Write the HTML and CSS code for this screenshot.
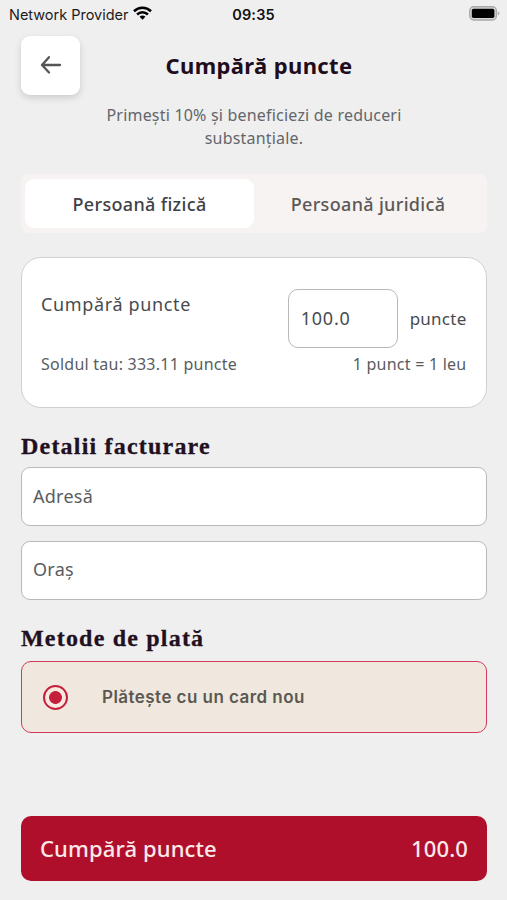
FILE: index.html
```html
<!DOCTYPE html>
<html lang="ro">
<head>
<meta charset="utf-8">
<meta name="viewport" content="width=device-width, initial-scale=1">
<title>Cumpără puncte</title>
<link rel="stylesheet" href="styles.css">
</head>
<body>
<div class="status">
  <div class="carrier"><span>Network Provider</span>
    <svg class="wifi" width="19" height="14" viewBox="0 0 19 14" fill="none" stroke="#000" stroke-width="2.6"><path d="M1 5.2C5.8.5 13.2.5 18 5.2"/><path d="M4.1 8.5c3.1-3 7.7-3 10.8 0"/><path d="M6.6 10.7c1.7-1.5 4.1-1.5 5.8 0L9.5 13.7z" fill="#000" stroke="none"/></svg>
  </div>
  <time class="clock">09:35</time>
  <svg class="battery" width="31" height="15" viewBox="0 0 31 15"><rect x=".8" y=".8" width="26.6" height="13.2" rx="4" fill="#d6d6d6" stroke="#a9a9a9" stroke-width="1.4"/><rect x="2.8" y="2.8" width="22.6" height="9.2" rx="1.8"/><path d="M28.9 5.2c2 .8 2 3.6 0 4.4z" fill="#a9a9a9"/></svg>
</div>
<header class="top">
  <button class="back" aria-label="Înapoi"><svg width="22" height="20" viewBox="0 0 22 20" fill="none" stroke="#555" stroke-width="2.3" stroke-linecap="round" stroke-linejoin="round"><path d="M20 10H2M9 2.2 2 10l7 7.5"/></svg></button>
  <h1 class="title">Cumpără puncte</h1>
</header>
<p class="intro">Primești 10% și beneficiezi de reduceri<br>substanțiale.</p>
<div class="tabs">
  <div class="tab active"><span>Persoană fizică</span></div>
  <div class="tab"><span>Persoană juridică</span></div>
</div>
<section class="card">
  <div class="row">
    <span class="label">Cumpără puncte</span>
    <div class="amount"><div class="amount-box">100.0</div><span class="unit">puncte</span></div>
  </div>
  <div class="row notes"><span class="balance">Soldul tau: 333.11 puncte</span><span class="rate">1 punct = 1 leu</span></div>
</section>
<h2 class="heading billing">Detalii facturare</h2>
<div class="fields">
  <div class="field">Adresă</div>
  <div class="field city">Oraș</div>
</div>
<h2 class="heading payment">Metode de plată</h2>
<div class="method"><span class="radio"></span><span class="method-name">Plătește cu un card nou</span></div>
<button class="buy"><span class="buy-label">Cumpără puncte</span><span class="buy-total">100.0</span></button>
</body>
</html>
```
FILE: styles.css
```css
* { box-sizing: border-box; }
body {
  margin: 0;
  padding: 0 20px 0 21px;
  height: 900px;
  overflow: hidden;
  display: flex;
  flex-direction: column;
  background: #efefef;
  color: #484b4f;
  font-family: "Noto Sans", sans-serif;
}
button { border: 0; padding: 0; font: inherit; }
.status {
  display: grid;
  grid-template-columns: 1fr auto 1fr;
  align-items: center;
  height: 28px;
  margin: 0 -13px 0 -12px;
  font-family: Inter, sans-serif;
  font-size: 14.5px;
  color: #1c1c1c;
}
.carrier { display: flex; align-items: center; gap: 5px; white-space: nowrap; }
.carrier span { letter-spacing: -0.02px; }
.wifi { margin-top: -3px; }
.clock { margin-left: -2px; font-weight: 600; font-size: 14.5px; letter-spacing: 0.15px; color: #111; }
.battery { justify-self: end; margin-top: -2px; }
.top {
  display: grid;
  grid-template-columns: 60px 1fr 60px;
  align-items: center;
  height: 60px;
  margin-top: 7px;
}
.back {
  width: 59px;
  height: 59px;
  display: grid;
  place-items: center;
  background: #fff;
  border-radius: 9px;
  box-shadow: 0 3px 7px rgba(0, 0, 0, 0.14);
}
.title {
  margin: 0 0 0 10px;
  text-align: center;
  font-size: 22px;
  font-weight: 700;
  line-height: 30px;
  letter-spacing: 0.37px;
  color: #1f0d1d;
}
.intro {
  margin: 9px 0 0;
  text-align: center;
  font-size: 16px;
  line-height: 23px;
  letter-spacing: 0.2px;
  color: #63666a;
}
.tabs {
  display: grid;
  grid-template-columns: 229px 1fr;
  height: 59px;
  margin-top: 24px;
  padding: 5px 5px 5px 4px;
  background: #f7f3f2;
  border-radius: 8px;
}
.tab {
  display: grid;
  place-items: center;
  border-radius: 9px;
  font-size: 18px;
  font-weight: 500;
  letter-spacing: 0.33px;
  color: #5c5856;
}
.active { background: #fff; color: #3e4147; }
.card {
  height: 151px;
  margin-top: 24px;
  padding: 31px 19.5px 0 19px;
  background: #fff;
  border: 1px solid #d0d0d0;
  border-radius: 20px;
}
.row { display: flex; justify-content: space-between; }
.label { margin-top: 1px; font-size: 18px; line-height: 28px; letter-spacing: 0.65px; }
.amount { display: flex; align-items: center; gap: 12px; }
.amount-box {
  width: 110px;
  height: 59px;
  padding-left: 12px;
  border: 1px solid #b9b9b9;
  border-radius: 10px;
  font-size: 18px;
  line-height: 57px;
  letter-spacing: 0.8px;
}
.unit { font-size: 17px; letter-spacing: 0.25px; }
.notes { margin-top: 4px; font-size: 16px; line-height: 24px; letter-spacing: 0.24px; color: #595c60; }
.heading {
  margin: 0;
  font-family: "Liberation Serif", serif;
  font-weight: 700;
  font-size: 24px;
  line-height: 30px;
  letter-spacing: 1.2px;
  color: #22101f;
  -webkit-text-stroke: 0.3px #22101f;
}
.billing { margin-top: 23px; }
.fields { display: grid; gap: 15px; margin-top: 6px; }
.field {
  height: 59px;
  padding-left: 11px;
  background: #fff;
  border: 1px solid #b9b9b9;
  border-radius: 9px;
  font-size: 18px;
  line-height: 57px;
  letter-spacing: 0.25px;
  color: #595c60;
}
.city { line-height: 55px; }
.payment { margin-top: 23px; }
.method {
  display: flex;
  align-items: center;
  gap: 34px;
  height: 72px;
  margin-top: 8px;
  padding-left: 21px;
  background: #f0e8de;
  border: 1.5px solid #d23a5c;
  border-radius: 10px;
}
.radio {
  width: 25px;
  height: 25px;
  border: 2.5px solid #c41f3b;
  border-radius: 50%;
  background: radial-gradient(circle, #c41f3b 6px, #f7e8e0 6.8px);
}
.method-name { font-family: Inter, sans-serif; font-weight: 600; font-size: 17px; letter-spacing: 0.45px; color: #5b5852; }
.buy {
  display: flex;
  align-items: center;
  justify-content: space-between;
  height: 65px;
  margin-top: 83px;
  padding: 0 19px 2px 19px;
  background: #b00f2b;
  border-radius: 10px;
  color: #fbe9ea;
  font-size: 22px;
  font-weight: 500;
  letter-spacing: 0.12px;
}
```
